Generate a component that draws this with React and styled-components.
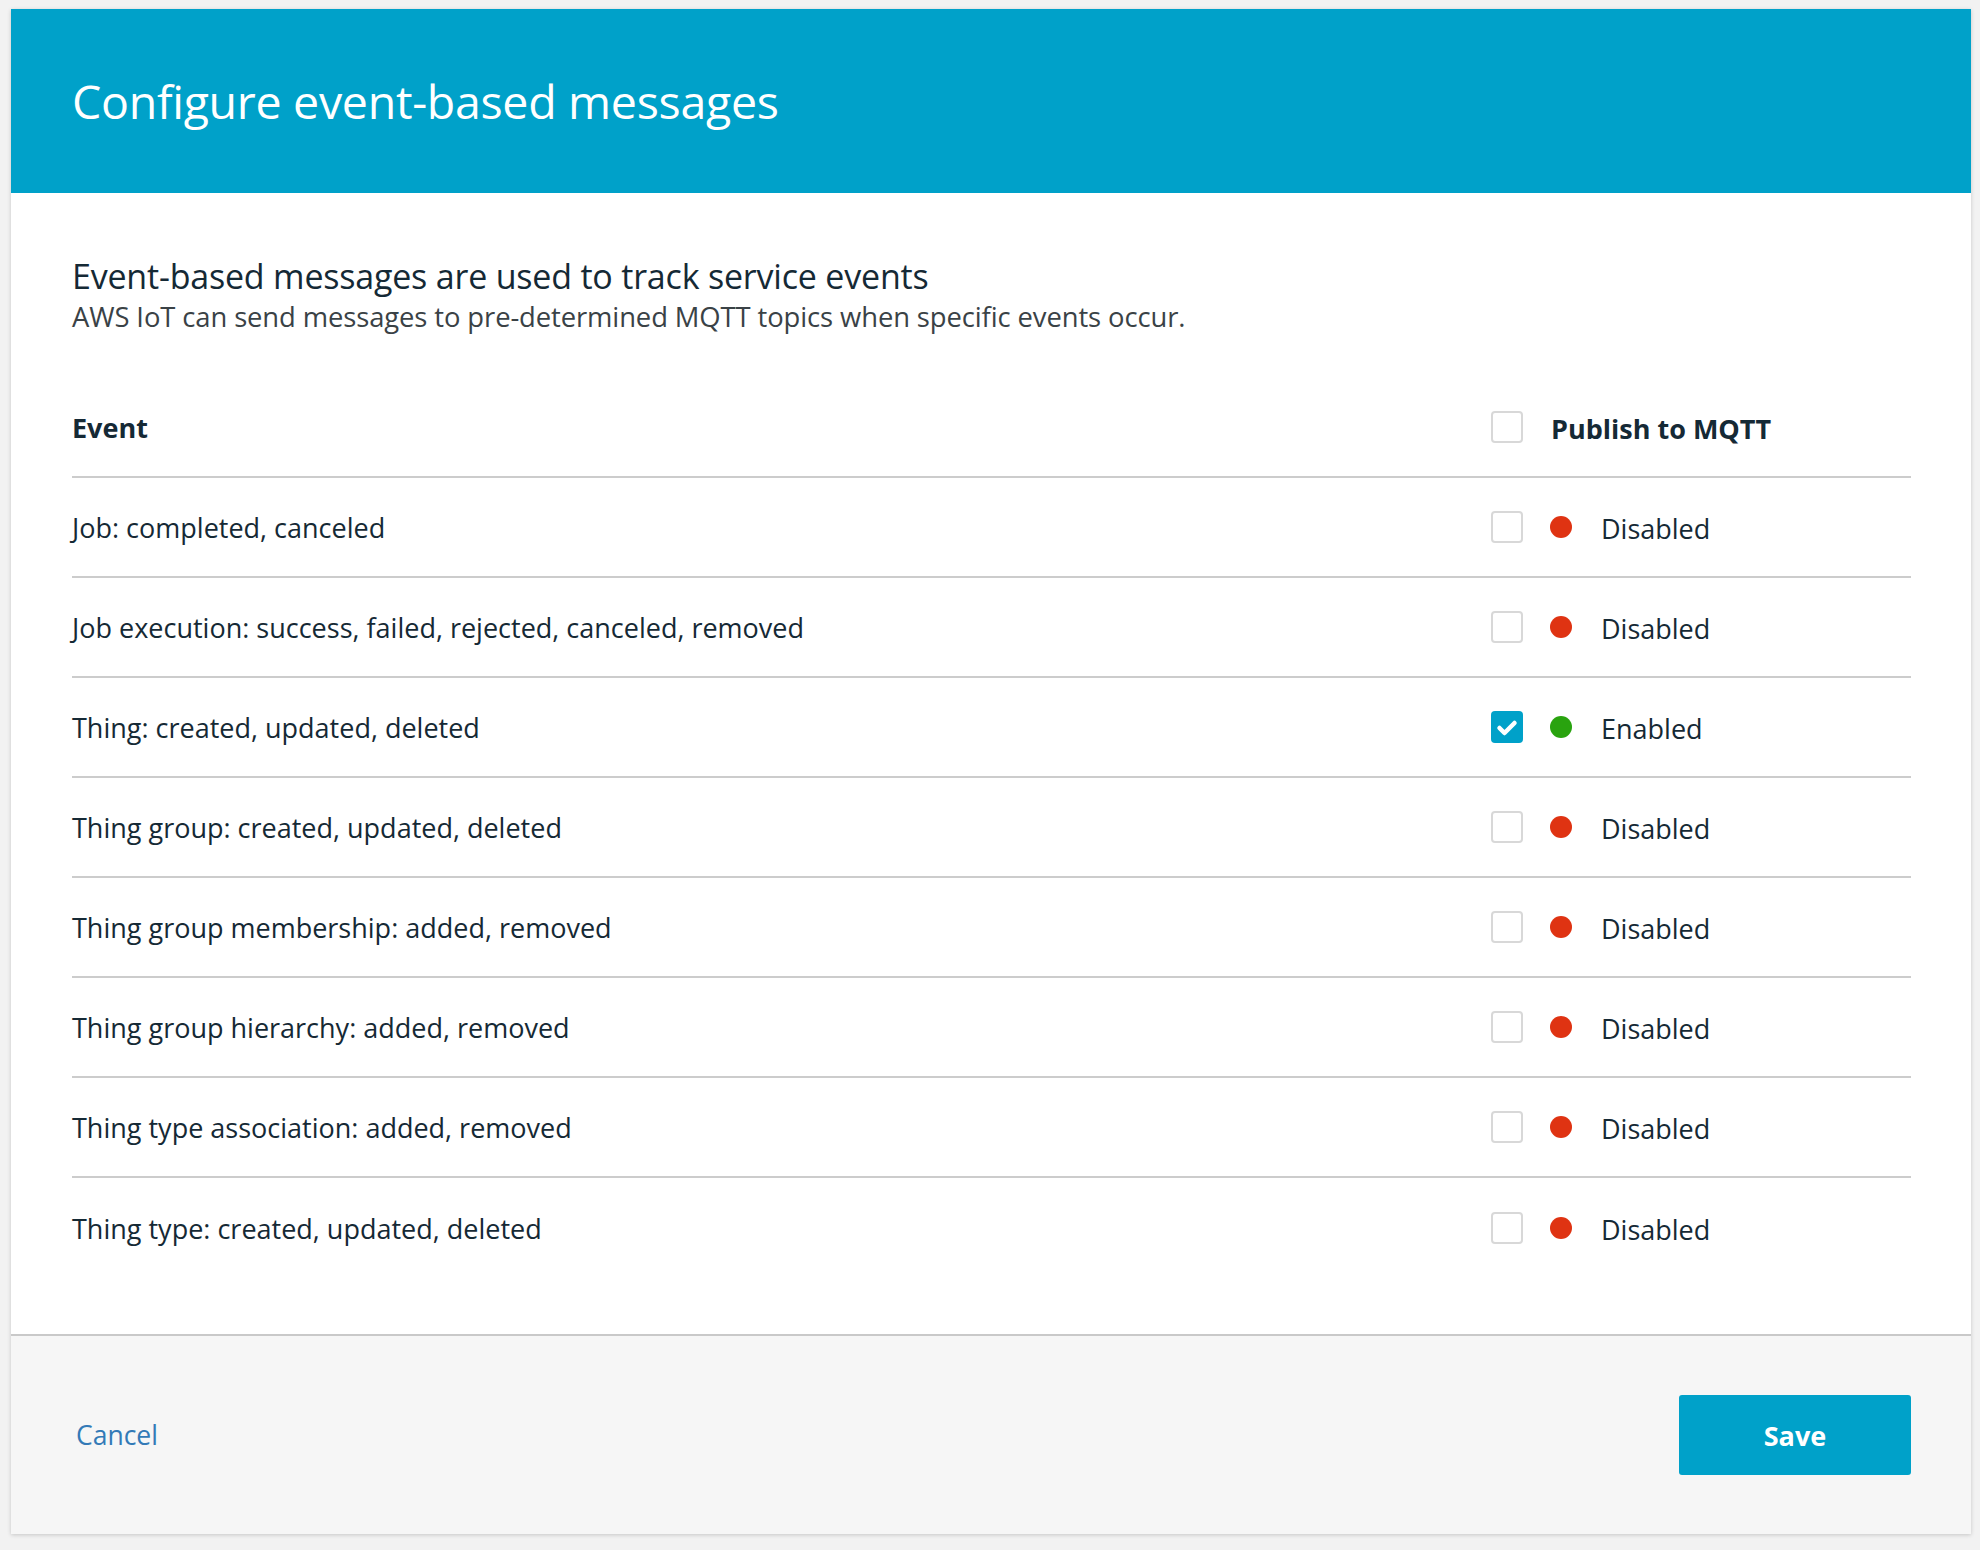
import React, { useState } from "react";
import styled, { createGlobalStyle } from "styled-components";

const Global = createGlobalStyle`
  html, body { margin: 0; padding: 0; background: #f2f2f2; }
  body { font-family: "Open Sans", "Noto Sans", sans-serif; color: #152935; }
  * { box-sizing: border-box; }
`;

const Page = styled.div`
  padding: 9px 9px 13px 11px;
`;

const Modal = styled.div`
  background: #fff;
  box-shadow: 0 1px 4px rgba(0, 0, 0, 0.18);
  display: flex;
  flex-direction: column;
`;

const Header = styled.header`
  height: 184px;
  background: #00a1c9;
  display: flex;
  align-items: center;
  padding: 0 61px;
`;

const Title = styled.h1`
  margin: 0;
  font-size: 46.5px;
  font-weight: 400;
  color: #fff;
  letter-spacing: -0.3px;
`;

const Body = styled.div`
  padding: 61px 60px 56px 61px;
`;

const Intro = styled.div`
  display: flex;
  flex-direction: column;
  gap: 1px;
  margin-bottom: 43px;
`;

const Heading = styled.h2`
  margin: 0;
  font-size: 34px;
  font-weight: 400;
  line-height: 44px;
  color: #152935;
  letter-spacing: -0.2px;
`;

const Description = styled.p`
  margin: 0;
  font-size: 27.4px;
  line-height: 36px;
  color: #3a4246;
  letter-spacing: -0.1px;
`;

const Row = styled.div`
  display: grid;
  grid-template-columns: 1fr 420px;
  align-items: center;
  height: 100px;
  border-bottom: ${(p) => (p.$last ? "none" : "2px solid #cccccc")};
  font-size: 27px;
  color: #152935;
`;

const HeadCell = styled.div`
  font-weight: 700;
  font-size: 27px;
  padding-top: ${(p) => (p.$shift ? "3px" : "0")};
`;

const StatusCell = styled.div`
  display: flex;
  align-items: center;
`;

const StatusText = styled.span`
  padding-top: 3px;
`;

const Box = styled.button`
  width: 32px;
  height: 32px;
  padding: 0;
  border-radius: 4px;
  border: ${(p) => (p.$checked ? "none" : "2px solid #d8d8d8")};
  background: ${(p) => (p.$checked ? "#00a1c9" : "#fff")};
  display: flex;
  align-items: center;
  justify-content: center;
  cursor: pointer;
  flex: none;
  margin-right: ${(p) => (p.$header ? "28px" : "27px")};
`;

const Dot = styled.span`
  width: 22px;
  height: 22px;
  border-radius: 50%;
  background: ${(p) => (p.$on ? "#29a30f" : "#df3312")};
  margin-right: 29px;
  flex: none;
`;

const Footer = styled.footer`
  height: 200px;
  border-top: 2px solid #c9c9c9;
  background: #f6f6f6;
  display: flex;
  align-items: center;
  justify-content: space-between;
  padding: 0 60px 0 65px;
`;

const CancelLink = styled.a`
  font-size: 26.5px;
  color: #337ab7;
  text-decoration: none;
  cursor: pointer;
`;

const SaveButton = styled.button`
  width: 232px;
  height: 80px;
  border: none;
  border-radius: 3px;
  background: #00a1c9;
  color: #fff;
  font-family: inherit;
  font-size: 27px;
  font-weight: 700;
  cursor: pointer;
`;

const Check = () => (
  <svg width="32" height="32" viewBox="0 0 32 32">
    <path d="M8.5 17 L13.5 22 L23.5 12" fill="none" stroke="#fff" strokeWidth="4.5" strokeLinecap="round" strokeLinejoin="round" />
  </svg>
);

const Checkbox = ({ checked, header, onClick }) => (
  <Box $checked={checked} $header={header} onClick={onClick} aria-checked={checked} role="checkbox">
    {checked && <Check />}
  </Box>
);

const events = [
  ["Job: completed, canceled", false],
  ["Job execution: success, failed, rejected, canceled, removed", false],
  ["Thing: created, updated, deleted", true],
  ["Thing group: created, updated, deleted", false],
  ["Thing group membership: added, removed", false],
  ["Thing group hierarchy: added, removed", false],
  ["Thing type association: added, removed", false],
  ["Thing type: created, updated, deleted", false],
];

export default function App() {
  const [state, setState] = useState(events.map((e) => e[1]));
  const toggle = (i) => setState((s) => s.map((v, j) => (j === i ? !v : v)));
  return (
    <Page>
      <Global />
      <Modal>
        <Header>
          <Title>Configure event-based messages</Title>
        </Header>
        <Body>
          <Intro>
            <Heading>Event-based messages are used to track service events</Heading>
            <Description>AWS IoT can send messages to pre-determined MQTT topics when specific events occur.</Description>
          </Intro>
          <Row>
            <HeadCell>Event</HeadCell>
            <StatusCell>
              <Checkbox checked={false} header />
              <HeadCell $shift>Publish to MQTT</HeadCell>
            </StatusCell>
          </Row>
          {events.map(([label], i) => (
            <Row key={label} $last={i === events.length - 1}>
              <div>{label}</div>
              <StatusCell>
                <Checkbox checked={state[i]} onClick={() => toggle(i)} />
                <Dot $on={state[i]} />
                <StatusText>{state[i] ? "Enabled" : "Disabled"}</StatusText>
              </StatusCell>
            </Row>
          ))}
        </Body>
        <Footer>
          <CancelLink>Cancel</CancelLink>
          <SaveButton>Save</SaveButton>
        </Footer>
      </Modal>
    </Page>
  );
}
